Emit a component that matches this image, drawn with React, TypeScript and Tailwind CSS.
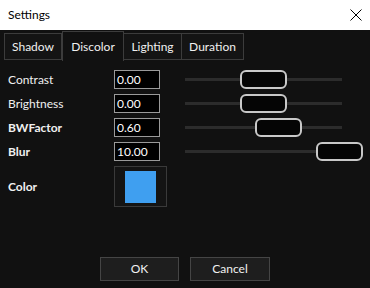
import React from "react";

const rows = [
  { label: "Contrast", value: "0.00", bold: false, thumb: 55 },
  { label: "Brightness", value: "0.00", bold: false, thumb: 55 },
  { label: "BWFactor", value: "0.60", bold: true, thumb: 70 },
  { label: "Blur", value: "10.00", bold: true, thumb: 131 },
];

const tabs = ["Shadow", "Discolor", "Lighting", "Duration"];
const tabW = [58, 62, 59, 63];

export default function App() {
  return (
    <div
      className="w-[370px] h-[288px] flex flex-col overflow-hidden text-[12px]"
      style={{ fontFamily: 'Lato, "Noto Sans", sans-serif' }}
    >
      <div className="h-[30px] bg-white flex items-center justify-between pl-[8px] pr-[8px] text-black">
        <span className="text-[12px]">Settings</span>
        <svg width="12" height="12" viewBox="0 0 12 12">
          <path d="M0.5 0.5 L11.5 11.5 M11.5 0.5 L0.5 11.5" stroke="#000" strokeWidth="1" />
        </svg>
      </div>
      <div className="flex-1 bg-[#111111] flex flex-col text-[#f0f0f0]">
        <div className="h-[30px] flex items-end pl-[4px]">
          {tabs.map((t, i) => {
            const sel = i === 1;
            return (
              <div
                key={t}
                style={{ width: tabW[i] }}
                className={
                  sel
                    ? "h-[30px] border border-b-0 border-[#3c3c3c] bg-[#111111] flex items-start pt-[6px] justify-center relative top-[1px]"
                    : "h-[27px] border border-[#3c3c3c] bg-[#141414] flex items-center justify-center -ml-[1px] first:ml-0"
                }
              >
                {t}
              </div>
            );
          })}
        </div>
        <div className="mt-[10px] flex flex-col">
          {rows.map((r) => (
            <div key={r.label} className="h-[24px] flex items-start">
              <div
                className={
                  "w-[114px] pl-[8px] h-[19px] flex items-center " + (r.bold ? "font-bold" : "")
                }
              >
                {r.label}
              </div>
              <div className="w-[46px] h-[19px] border border-[#9a9a9a] bg-black flex items-center pl-[2px] text-white">
                {r.value}
              </div>
              <div className="ml-[25px] w-[157px] h-[19px] relative flex items-center">
                <div className="w-full h-[3px] bg-[#2c2c2c]" />
                <div
                  className="absolute top-0 w-[47px] h-[19px] rounded-[6px] border-2 border-[#c8c8c8] bg-[#050505]"
                  style={{ left: r.thumb }}
                />
              </div>
            </div>
          ))}
          <div className="h-[41px] flex items-center">
            <div className="w-[114px] pl-[8px] font-bold">Color</div>
            <div className="w-[53px] h-[41px] border border-[#3a3a3a] bg-[#141414] flex items-center justify-center">
              <div className="w-[31px] h-[32px] bg-[#3f9ff0]" />
            </div>
          </div>
        </div>
        <div className="mt-[50px] flex pl-[100px] gap-[11px]">
          <div className="w-[79px] h-[24px] border border-[#454545] bg-[#1e1e1e] flex items-center justify-center">
            OK
          </div>
          <div className="w-[80px] h-[24px] border border-[#454545] bg-[#1e1e1e] flex items-center justify-center">
            Cancel
          </div>
        </div>
      </div>
    </div>
  );
}
